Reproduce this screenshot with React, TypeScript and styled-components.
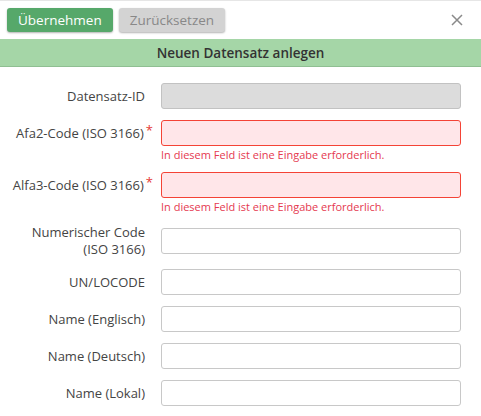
import React from "react";
import styled, { createGlobalStyle } from "styled-components";

const Global = createGlobalStyle`
  body { margin: 0; font-family: "Open Sans", "Liberation Sans", sans-serif; background: #fff; }
`;

const Toolbar = styled.div`
  display: flex;
  align-items: center;
  gap: 6px;
  padding: 5px 7px 0 7px;
  height: 34px;
  box-sizing: border-box;
  border-top: 1px solid #e6e6e6;
`;

const Button = styled.button<{ $primary?: boolean }>`
  height: 24px;
  padding: 0 11px;
  border: none;
  border-radius: 3px;
  font-family: inherit;
  font-size: 13.5px;
  color: ${(p) => (p.$primary ? "#fff" : "#888")};
  background: ${(p) => (p.$primary ? "#56a86a" : "#d3d3d3")};
  box-shadow: 0 1px 2px rgba(0, 0, 0, 0.3);
`;

const Close = styled.svg`
  margin-left: auto;
  margin-right: 11px;
`;

const Header = styled.div`
  margin-top: 5px;
  height: 27px;
  background: #a5d6a7;
  border-bottom: 1px solid #8fbf92;
  display: flex;
  align-items: center;
  justify-content: center;
  font-size: 13.5px;
  font-weight: 600;
  color: #333;
`;

const Form = styled.div`
  padding: 16px 20px 0 0;
  display: flex;
  flex-direction: column;
  gap: 11px;
`;

const Row = styled.div`
  display: grid;
  grid-template-columns: 161px 1fr;
  align-items: start;
`;

const Label = styled.div<{ $tall?: boolean }>`
  font-size: 13px;
  color: #444;
  text-align: right;
  padding-right: 16px;
  height: ${(p) => (p.$tall ? "34px" : "26px")};
  display: flex;
  align-items: center;
  justify-content: flex-end;
  line-height: 17px;
`;

const Star = styled.span`
  color: #e53935;
  margin-left: 2px;
  margin-right: -8px;
  align-self: flex-start;
  margin-top: 2px;
`;

const Field = styled.div<{ $tall?: boolean }>`
  display: flex;
  flex-direction: column;
  padding-top: ${(p) => (p.$tall ? "4px" : "0")};
`;

const Input = styled.div<{ $state?: "error" | "disabled" }>`
  height: 26px;
  box-sizing: border-box;
  border-radius: 3px;
  border: 1px solid
    ${(p) => (p.$state === "error" ? "#f44336" : p.$state === "disabled" ? "#c2c2c2" : "#c8c8c8")};
  background: ${(p) => (p.$state === "error" ? "#ffe6e9" : p.$state === "disabled" ? "#dcdcdc" : "#fff")};
`;

const Error = styled.div`
  font-size: 11px;
  color: #e53950;
  height: 15px;
  line-height: 17px;
`;

const rows: { label: React.ReactNode; state?: "error" | "disabled"; req?: boolean; tall?: boolean }[] = [
  { label: "Datensatz-ID", state: "disabled" },
  { label: "Afa2-Code (ISO 3166)", state: "error", req: true },
  { label: "Alfa3-Code (ISO 3166)", state: "error", req: true },
  { label: <span>Numerischer Code<br />(ISO 3166)</span>, tall: true },
  { label: "UN/LOCODE" },
  { label: "Name (Englisch)" },
  { label: "Name (Deutsch)" },
  { label: "Name (Lokal)" },
];

export default function App() {
  return (
    <>
      <Global />
      <Toolbar>
        <Button $primary>Übernehmen</Button>
        <Button>Zurücksetzen</Button>
        <Close width="12" height="12" viewBox="0 0 12 12">
          <path d="M1 1L11 11M11 1L1 11" stroke="#8a8a8a" strokeWidth="1.5" />
        </Close>
      </Toolbar>
      <Header>Neuen Datensatz anlegen</Header>
      <Form>
        {rows.map((r, i) => (
          <Row key={i}>
            <Label $tall={r.tall}>
              {r.label}
              {r.req && <Star>*</Star>}
            </Label>
            <Field $tall={r.tall}>
              <Input $state={r.state} />
              {r.state === "error" && <Error>In diesem Feld ist eine Eingabe erforderlich.</Error>}
            </Field>
          </Row>
        ))}
      </Form>
    </>
  );
}
